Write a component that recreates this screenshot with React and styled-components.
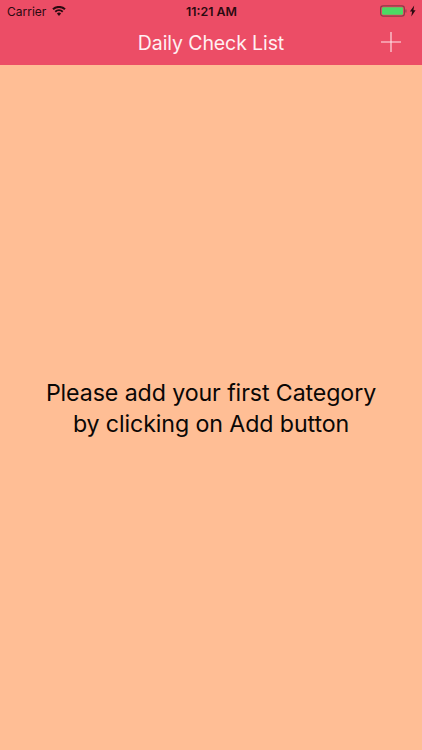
import React from "react";
import styled, { createGlobalStyle } from "styled-components";

const Global = createGlobalStyle`
  html, body { margin: 0; padding: 0; width: 422px; height: 750px; overflow: hidden; }
  #root { width: 422px; height: 750px; }
`;
const Screen = styled.div`
  width: 422px; height: 750px; display: flex; flex-direction: column;
  background: #ffbe95; font-family: Inter, "Liberation Sans", sans-serif; color: #000;
`;
const Header = styled.header`
  height: 65px; flex: none; background: #ec4d66; display: flex; flex-direction: column;
`;
const StatusBar = styled.div`
  height: 22px; padding: 0 6px 0 7px; display: grid; grid-template-columns: 1fr auto 1fr; align-items: center;
  font-size: 12px; color: #2a0a10;
`;
const StatusLeft = styled.div`display: flex; align-items: center; gap: 6px;`;
const Clock = styled.div`font-weight: 600; font-size: 12.4px;`;
const StatusRight = styled.div`display: flex; justify-content: flex-end; align-items: center;`;
const NavBar = styled.div`
  flex: 1; display: flex; align-items: center; justify-content: center; position: relative; padding-bottom: 2px;
`;
const Title = styled.h1`
  margin: 0; font-size: 19.5px; font-weight: 400; color: #fff0f2; letter-spacing: -0.1px;
`;
const AddButton = styled.button`
  position: absolute; right: 20px; top: 9px; width: 22px; height: 22px; padding: 0; border: 0; background: none; display: block;
`;
const Body = styled.main`
  flex: 1; display: flex; align-items: center; justify-content: center; padding-top: 2px;
`;
const Message = styled.p`
  margin: 0; text-align: center; font-size: 23.2px; line-height: 30.5px; font-weight: 400; color: #0a0705; letter-spacing: -0.1px;
`;

export default function App() {
  return (
    <Screen>
      <Global />
      <Header>
        <StatusBar>
          <StatusLeft>
            <span>Carrier</span>
            <svg width="14" height="10" viewBox="0 0 14 10" fill="#2a0a10">
              <path d="M7 10 4.9 7.6a3 3 0 0 1 4.2 0z" />
              <path d="M3.9 6.4 2.6 5a6.4 6.4 0 0 1 8.8 0l-1.3 1.4a4.5 4.5 0 0 0-6.2 0z" />
              <path d="M1.7 4 .3 2.6a9.7 9.7 0 0 1 13.4 0L12.3 4a7.7 7.7 0 0 0-10.6 0z" />
            </svg>
          </StatusLeft>
          <Clock>11:21 AM</Clock>
          <StatusRight>
            <svg width="36" height="12" viewBox="0 0 36 12">
              <rect x="0.6" y="0.9" width="23.8" height="10.2" rx="2.6" fill="none" stroke="#8e3a48" strokeWidth="1.2" />
              <rect x="2" y="2.3" width="21" height="7.4" rx="1.2" fill="#4cd964" />
              <rect x="25.4" y="4.5" width="1" height="3" fill="#8e3a48" />
              <path d="M34.2 .6 29.9 6.6h2.2l-.8 4.9 4.3-6.2h-2.2z" fill="#2a0a10" />
            </svg>
          </StatusRight>
        </StatusBar>
        <NavBar>
          <Title>Daily Check List</Title>
          <AddButton aria-label="Add">
            <svg width="22" height="22" viewBox="0 0 22 22" stroke="#ffe6ea" strokeWidth="1.1" fill="none">
              <path d="M11 1v20M1 11h20" />
            </svg>
          </AddButton>
        </NavBar>
      </Header>
      <Body>
        <Message>
          Please add your first Category<br />by clicking on Add button
        </Message>
      </Body>
    </Screen>
  );
}
